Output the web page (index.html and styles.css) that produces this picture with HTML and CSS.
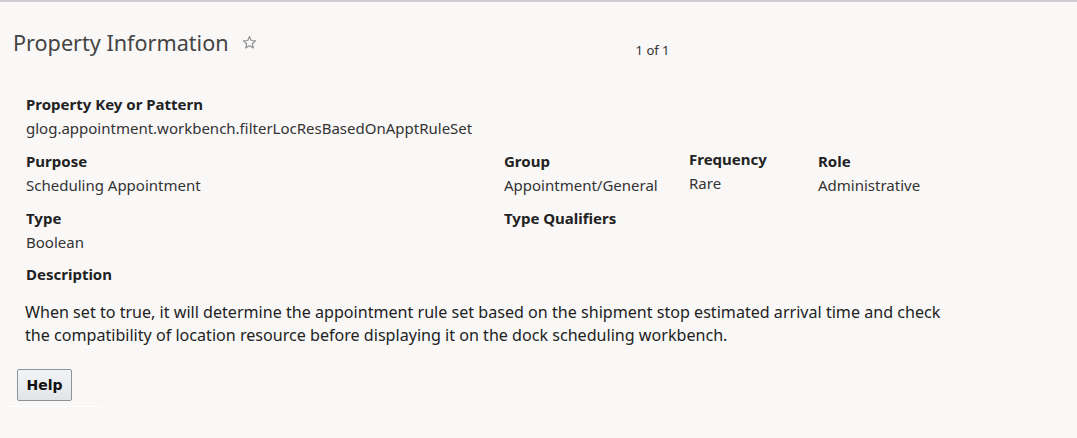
FILE: index.html
```html
<!DOCTYPE html>
<html>
<head>
<meta charset="utf-8">
<link rel="stylesheet" href="styles.css">
</head>
<body>
<div class="page">
  <div class="header">
    <h1 class="title">Property Information</h1>
    <span class="star"><svg width="15" height="15" viewBox="0 0 24 24"><path d="M12 2.5l2.8 6.3 6.9.6-5.2 4.6 1.6 6.8L12 17.2l-6.1 3.6 1.6-6.8L2.3 9.4l6.9-.6z" fill="none" stroke="#8d8d8d" stroke-width="1.8" stroke-linejoin="round"/></svg></span>
    <span class="pager">1 of 1</span>
  </div>
  <div class="content">
    <div class="field">
      <div class="label">Property Key or Pattern</div>
      <div class="value">glog.appointment.workbench.filterLocResBasedOnApptRuleSet</div>
    </div>
    <div class="row">
      <div class="field c1">
        <div class="label">Purpose</div>
        <div class="value">Scheduling Appointment</div>
      </div>
      <div class="field c2">
        <div class="label">Group</div>
        <div class="value">Appointment/General</div>
      </div>
      <div class="field c3 up">
        <div class="label">Frequency</div>
        <div class="value">Rare</div>
      </div>
      <div class="field c4">
        <div class="label">Role</div>
        <div class="value">Administrative</div>
      </div>
    </div>
    <div class="row">
      <div class="field c1">
        <div class="label">Type</div>
        <div class="value">Boolean</div>
      </div>
      <div class="field c2">
        <div class="label">Type Qualifiers</div>
        <div class="value"></div>
      </div>
    </div>
    <div class="field desc-head">
      <div class="label">Description</div>
    </div>
    <p class="desc">When set to true, it will determine the appointment rule set based on the shipment stop estimated arrival time and check the compatibility of location resource before displaying it on the dock scheduling workbench.</p>
  </div>
  <div class="actions">
    <button class="btn">Help</button>
  </div>
</div>
</body>
</html>
```
FILE: styles.css
```css
html, body {
  margin: 0;
  padding: 0;
  background: #f9f8f7;
  font-family: "Noto Sans", "Open Sans", sans-serif;
  color: #333;
}
.page {
  border-top: 2px solid #cfcbd0;
  height: 436px;
}
.header {
  display: flex;
  align-items: flex-start;
  padding: 26px 0 0 13px;
  height: 30px;
}
.title {
  margin: 0;
  font-size: 21.6px;
  line-height: 30px;
  font-weight: normal;
  color: #444;
}
.star {
  display: flex;
  margin-left: 13px;
  margin-top: 7px;
}
.pager {
  margin-left: 379px;
  margin-top: 13px;
  font-size: 13px;
  line-height: 18px;
  color: #333;
}
.content {
  padding: 34px 0 0 26px;
}
.field {
  display: flex;
  flex-direction: column;
}
.label {
  font-size: 15px;
  font-weight: bold;
  color: #222;
  line-height: 24px;
}
.value {
  font-size: 15px;
  color: #333;
  line-height: 24px;
  min-height: 24px;
}
.row {
  display: flex;
  margin-top: 9px;
}
.c1 { width: 478px; }
.c2 { width: 185px; }
.c3 { width: 129px; }
.c4 { width: 150px; }
.up { margin-top: -2px; }
.desc-head { margin-top: 8px; }
.desc {
  margin: 15px 0 0 -1px;
  font-size: 16.1px;
  line-height: 23px;
  color: #222;
  width: 935px;
}
.actions {
  margin: 22px 0 0 7px;
  width: 86px;
  padding: 0 0 5px 10px;
  border-bottom: 1px solid #ffffff;
}
.btn {
  display: block;
  font-family: "DejaVu Sans", sans-serif;
  font-weight: bold;
  font-size: 14px;
  color: #111;
  height: 32px;
  width: 55px;
  padding: 0;
  border: 1px solid #8e9398;
  border-radius: 2px;
  background: linear-gradient(#f2f3f5, #e2e5e8);
}
```
